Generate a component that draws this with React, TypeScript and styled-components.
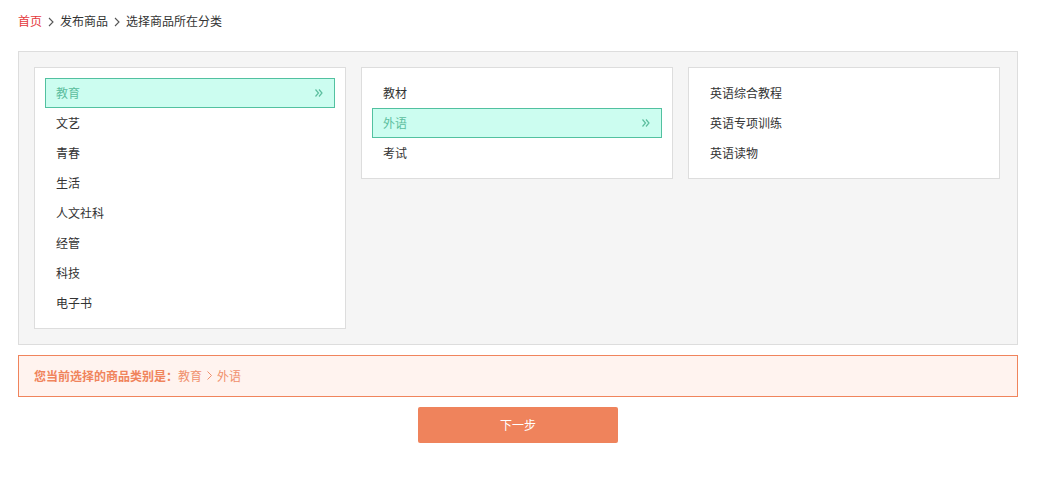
import styled, { createGlobalStyle } from 'styled-components';

const GlobalStyle = createGlobalStyle`
  body {
    margin: 0;
    background: #FFFFFF;
    font-family: 'Liberation Sans', 'Noto Sans CJK SC', sans-serif;
    font-size: 12px;
    color: #333333;
  }
`;

const Page = styled.div`
  width: 1000px;
  padding: 0 18px;
`;

const Crumbs = styled.nav`
  display: flex;
  align-items: center;
  gap: 6px;
  height: 16px;
  padding-top: 14px;
  margin-bottom: 21px;
  line-height: 16px;
`;

const CrumbLink = styled.span<{ $home?: boolean }>`
  color: ${(p) => (p.$home ? '#E4393C' : '#333333')};
`;

const CrumbSep = styled.svg`
  width: 6px;
  height: 10px;
  fill: none;
  stroke: #555555;
  stroke-width: 1.1;
`;

const Picker = styled.div`
  display: flex;
  align-items: flex-start;
  gap: 15px;
  padding: 15px 16px 15px 15px;
  background: #F5F5F5;
  border: 1px solid #DDDDDD;
`;

const Column = styled.ul`
  width: 290px;
  margin: 0;
  padding: 10px;
  list-style: none;
  background: #FFFFFF;
  border: 1px solid #DDDDDD;
`;

const Item = styled.li<{ $active?: boolean }>`
  display: flex;
  align-items: center;
  justify-content: space-between;
  height: 26px;
  padding: 0 10px 2px;
  border: 1px solid ${(p) => (p.$active ? '#52C1A0' : 'transparent')};
  background: ${(p) => (p.$active ? '#CCFDF0' : 'transparent')};
  color: ${(p) => (p.$active ? '#5BBE9E' : '#333333')};
  cursor: pointer;
`;

const Arrow = styled.svg`
  width: 8px;
  height: 8px;
  margin: 2px 1px 0 0;
  fill: none;
  stroke: #5BBE9E;
  stroke-width: 1.2;
`;

const Notice = styled.div`
  display: flex;
  align-items: center;
  height: 38px;
  margin-top: 10px;
  padding: 0 15px 2px;
  border: 1px solid #F0845C;
  background: #FFF3EF;
  color: #F0845C;
  font-weight: bold;
`;

const Path = styled.span`
  display: inline-flex;
  align-items: center;
  gap: 5px;
  font-weight: normal;
  color: #F0906C;
`;

const PathSep = styled.svg`
  width: 5px;
  height: 9px;
  fill: none;
  stroke: #F0906C;
  stroke-width: 1;
`;

const Actions = styled.div`
  display: flex;
  justify-content: center;
  margin-top: 10px;
`;

const NextButton = styled.button`
  width: 200px;
  height: 36px;
  padding-bottom: 2px;
  border: none;
  border-radius: 2px;
  background: #EF835C;
  color: #FFFFFF;
  font-family: inherit;
  font-size: 12px;
  cursor: pointer;
`;

const first = ['教育', '文艺', '青春', '生活', '人文社科', '经管', '科技', '电子书'];
const second = ['教材', '外语', '考试'];
const third = ['英语综合教程', '英语专项训练', '英语读物'];

function Chevron() {
  return (
    <CrumbSep viewBox="0 0 6 10">
      <polyline points="1,1 5,5 1,9" />
    </CrumbSep>
  );
}

function DoubleArrow() {
  return (
    <Arrow viewBox="0 0 8 8">
      <polyline points="0.5,0.5 3.5,4 0.5,7.5" />
      <polyline points="4,0.5 7,4 4,7.5" />
    </Arrow>
  );
}

function CategoryColumn({ items, active }: { items: string[]; active?: string }) {
  return (
    <Column>
      {items.map((name) => (
        <Item key={name} $active={name === active}>
          <span>{name}</span>
          {name === active && <DoubleArrow />}
        </Item>
      ))}
    </Column>
  );
}

export default function App() {
  return (
    <Page>
      <GlobalStyle />
      <Crumbs>
        <CrumbLink $home>首页</CrumbLink>
        <Chevron />
        <CrumbLink>发布商品</CrumbLink>
        <Chevron />
        <CrumbLink>选择商品所在分类</CrumbLink>
      </Crumbs>
      <Picker>
        <CategoryColumn items={first} active="教育" />
        <CategoryColumn items={second} active="外语" />
        <CategoryColumn items={third} />
      </Picker>
      <Notice>
        您当前选择的商品类别是：
        <Path>
          教育
          <PathSep viewBox="0 0 5 9">
            <polyline points="0.5,0.5 4.5,4.5 0.5,8.5" />
          </PathSep>
          外语
        </Path>
      </Notice>
      <Actions>
        <NextButton>下一步</NextButton>
      </Actions>
    </Page>
  );
}
